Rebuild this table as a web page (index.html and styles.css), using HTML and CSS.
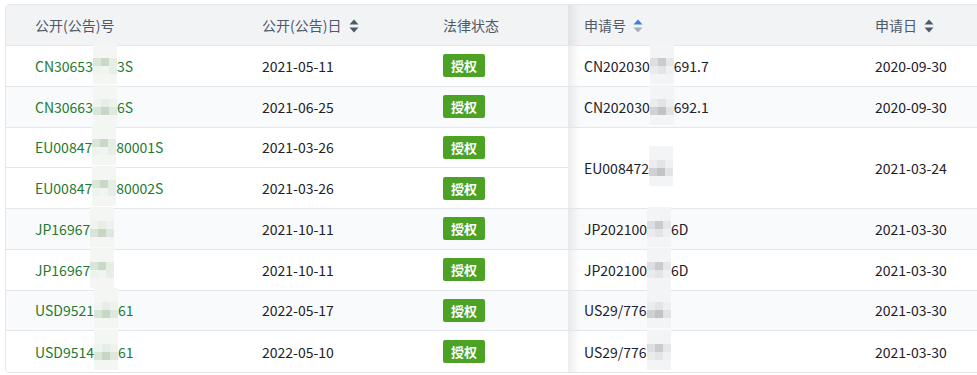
FILE: index.html
```html
<!DOCTYPE html>
<html>
    <head>
        <title>同族专利</title>
        <link rel="stylesheet" href="styles.css">
    </head>
    <body>
        <div class="table-wrap">
            <table class="family">
                <colgroup>
                    <col class="c-pub">
                    <col class="c-date">
                    <col class="c-status">
                    <col class="c-app">
                    <col class="c-appdate">
                </colgroup>
                <thead>
                    <tr>
                        <th class="first">公开(公告)号</th>
                        <th>公开(公告)日 <svg class="sort" width="10" height="16" viewBox="0 0 10 16"><path d="M5 1.5 L9.5 6.5 H0.5 Z"/><path d="M5 14.5 L9.5 9.5 H0.5 Z"/></svg></th>
                        <th>法律状态</th>
                        <th class="app">申请号 <svg class="sort asc" width="10" height="16" viewBox="0 0 10 16"><path class="up" d="M5 1.5 L9.5 6.5 H0.5 Z"/><path class="down" d="M5 14.5 L9.5 9.5 H0.5 Z"/></svg></th>
                        <th>申请日 <svg class="sort" width="10" height="16" viewBox="0 0 10 16"><path d="M5 1.5 L9.5 6.5 H0.5 Z"/><path d="M5 14.5 L9.5 9.5 H0.5 Z"/></svg></th>
                    </tr>
                </thead>
                <tbody>
                    <tr>
                        <td class="first"><a class="pn">CN30653<span class="mask"><i></i><i></i><i></i><i></i><i></i><i></i></span>3S</a></td>
                        <td>2021-05-11</td>
                        <td><span class="tag">授权</span></td>
                        <td class="app">CN202030<span class="mask grey"><i></i><i></i><i></i><i></i><i></i><i></i></span>691.7</td>
                        <td>2020-09-30</td>
                    </tr>
                    <tr class="stripe">
                        <td class="first"><a class="pn">CN30663<span class="mask lo"><i></i><i></i><i></i><i></i><i></i><i></i></span>6S</a></td>
                        <td>2021-06-25</td>
                        <td><span class="tag">授权</span></td>
                        <td class="app">CN202030<span class="mask grey lo"><i></i><i></i><i></i><i></i><i></i><i></i></span>692.1</td>
                        <td>2020-09-30</td>
                    </tr>
                    <tr>
                        <td class="first"><a class="pn">EU00847<span class="mask"><i></i><i></i><i></i><i></i><i></i><i></i></span>80001S</a></td>
                        <td>2021-03-26</td>
                        <td><span class="tag">授权</span></td>
                        <td class="app" rowspan="2">EU008472<span class="mask grey lo"><i></i><i></i><i></i><i></i><i></i><i></i></span></td>
                        <td rowspan="2">2021-03-24</td>
                    </tr>
                    <tr>
                        <td class="first"><a class="pn">EU00847<span class="mask"><i></i><i></i><i></i><i></i><i></i><i></i></span>80002S</a></td>
                        <td>2021-03-26</td>
                        <td><span class="tag">授权</span></td>
                    </tr>
                    <tr class="stripe">
                        <td class="first"><a class="pn">JP16967<span class="mask lo"><i></i><i></i><i></i><i></i><i></i><i></i></span></a></td>
                        <td>2021-10-11</td>
                        <td><span class="tag">授权</span></td>
                        <td class="app">JP202100<span class="mask grey"><i></i><i></i><i></i><i></i><i></i><i></i></span>6D</td>
                        <td>2021-03-30</td>
                    </tr>
                    <tr>
                        <td class="first"><a class="pn">JP16967<span class="mask"><i></i><i></i><i></i><i></i><i></i><i></i></span></a></td>
                        <td>2021-10-11</td>
                        <td><span class="tag">授权</span></td>
                        <td class="app">JP202100<span class="mask grey"><i></i><i></i><i></i><i></i><i></i><i></i></span>6D</td>
                        <td>2021-03-30</td>
                    </tr>
                    <tr class="stripe">
                        <td class="first"><a class="pn">USD9521<span class="mask lo"><i></i><i></i><i></i><i></i><i></i><i></i></span>61</a></td>
                        <td>2022-05-17</td>
                        <td><span class="tag">授权</span></td>
                        <td class="app">US29/776<span class="mask grey lo"><i></i><i></i><i></i><i></i><i></i><i></i></span></td>
                        <td>2021-03-30</td>
                    </tr>
                    <tr>
                        <td class="first"><a class="pn">USD9514<span class="mask lo"><i></i><i></i><i></i><i></i><i></i><i></i></span>61</a></td>
                        <td>2022-05-10</td>
                        <td><span class="tag">授权</span></td>
                        <td class="app">US29/776<span class="mask grey"><i></i><i></i><i></i><i></i><i></i><i></i></span></td>
                        <td>2021-03-30</td>
                    </tr>
                </tbody>
            </table>
        </div>
    </body>
</html>
```

FILE: styles.css
```css
body {
    margin: 0;
    padding: 4px 0 0 5px;
    overflow: hidden;
    background: #fff;
    font-family: "Noto Sans CJK SC", "Noto Sans", sans-serif;
    font-size: 14px;
    color: #1d2129;
}
.table-wrap {
    width: 1020px;
    border: 1px solid #e5e6eb;
    border-radius: 4px;
    overflow: hidden;
}
.family {
    width: 100%;
    table-layout: fixed;
    border-collapse: separate;
    border-spacing: 0;
}
.c-pub {
    width: 240px;
}
.c-date {
    width: 181px;
}
.c-status {
    width: 141px;
}
.c-app {
    width: 291px;
}
th, td {
    box-sizing: border-box;
    padding: 0 16px;
    text-align: left;
    vertical-align: middle;
    white-space: nowrap;
    border-bottom: 1px solid #e5e6eb;
}
th {
    height: 41px;
    background: #f2f3f5;
    color: #4e5969;
    font-weight: normal;
}
td {
    height: 40.75px;
    background: #fff;
}
tbody tr:last-child td {
    border-bottom: none;
}
.stripe td {
    background: #f9fafb;
}
th.first, td.first {
    padding-left: 29px;
}
th.app, td.app {
    background-image: linear-gradient(to right, rgba(0, 0, 0, 0.07), rgba(0, 0, 0, 0) 12px);
}
.pn {
    color: #1e7a30;
    text-decoration: none;
}
.sort {
    margin-left: 4px;
    vertical-align: -3px;
    fill: #4e5969;
}
.sort.asc .up {
    fill: #3d7fe6;
}
.sort.asc .down {
    fill: #a7adb7;
}
.tag {
    display: inline-block;
    height: 23px;
    line-height: 23px;
    padding: 0 8px;
    border-radius: 2px;
    background: #4ba224;
    color: #fff;
    font-size: 13px;
    font-weight: bold;
}
/* pixelated redaction, kept out of the line box */
.mask {
    display: inline-grid;
    grid-template-columns: repeat(3, 8px);
    grid-template-rows: 8px 8px;
    padding: 14px 0 10px;
    margin: -12px 0;
    background: #f4f6f4;
    vertical-align: top;
}
.mask i:nth-child(1) { background: #dbe6da; }
.mask i:nth-child(2) { background: #c8dac6; }
.mask i:nth-child(3) { background: #e5ede4; }
.mask i:nth-child(4) { background: #eef3ee; }
.mask i:nth-child(5) { background: #f1f5f1; }
.mask i:nth-child(6) { background: #e7eee7; }
.mask.lo i:nth-child(1) { background: #f0f4f0; }
.mask.lo i:nth-child(2) { background: #e7eee6; }
.mask.lo i:nth-child(3) { background: #edf2ed; }
.mask.lo i:nth-child(4) { background: #d9e5d8; }
.mask.lo i:nth-child(5) { background: #c6d8c4; }
.mask.lo i:nth-child(6) { background: #dfe8de; }
.mask.grey {
    background: #f3f4f5;
}
.mask.grey i:nth-child(1) { background: #dcdee1; }
.mask.grey i:nth-child(2) { background: #c9cbcf; }
.mask.grey i:nth-child(3) { background: #e6e7e9; }
.mask.grey i:nth-child(4) { background: #eaebed; }
.mask.grey i:nth-child(5) { background: #e4e5e8; }
.mask.grey i:nth-child(6) { background: #eff0f1; }
.mask.grey.lo i:nth-child(1) { background: #ebecee; }
.mask.grey.lo i:nth-child(2) { background: #e3e4e6; }
.mask.grey.lo i:nth-child(3) { background: #eeeff0; }
.mask.grey.lo i:nth-child(4) { background: #cfd1d4; }
.mask.grey.lo i:nth-child(5) { background: #c1c3c7; }
.mask.grey.lo i:nth-child(6) { background: #e2e3e5; }
```
